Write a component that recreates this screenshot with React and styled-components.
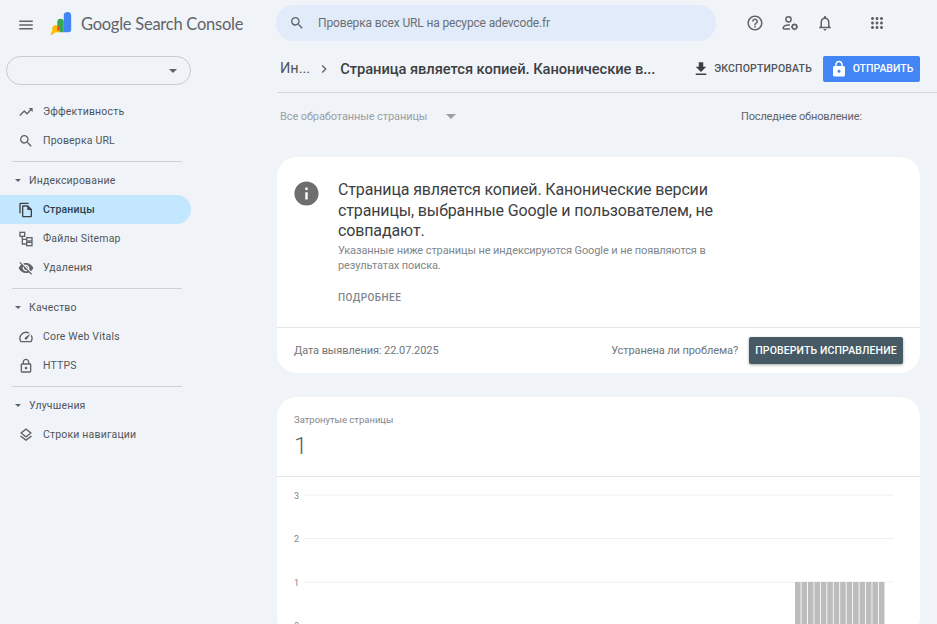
import React from 'react';
import styled, { createGlobalStyle } from 'styled-components';

const Global = createGlobalStyle`
  html, body { margin: 0; padding: 0; height: 624px; overflow: hidden; background: #f0f4f9; }
  body { font-family: Roboto, "Noto Sans", sans-serif; color: #444746; }
  * { box-sizing: border-box; }
`;

const Page = styled.div`
  display: grid;
  grid-template-columns: 277px 1fr;
  width: 937px;
  height: 624px;
  overflow: hidden;
`;
const Sidebar = styled.aside`
  display: flex;
  flex-direction: column;
`;
const Brand = styled.div`
  display: flex;
  align-items: center;
  height: 50px;
  padding-left: 17px;
`;
const BrandMark = styled.svg`
  width: 24px;
  height: 24px;
  margin-left: 14px;
  margin-right: 8px;
  margin-top: -4px;
  flex: none;
`;
const BrandName = styled.span`
  font-family: Lato, Roboto, sans-serif;
  font-size: 16.5px;
  letter-spacing: -0.25px;
  color: #5f6368;
  white-space: nowrap;
  margin-top: -2px;
`;
const PropertyPicker = styled.div`
  display: flex;
  align-items: center;
  justify-content: flex-end;
  width: 185px;
  height: 29px;
  margin: 6px 0 12px 6px;
  padding-right: 13px;
  border: 1px solid #c7c9cc;
  border-radius: 15px;
`;
const Caret = styled.span`
  width: 0;
  height: 0;
  border-left: ${p => p.$size || 4}px solid transparent;
  border-right: ${p => p.$size || 4}px solid transparent;
  border-top: ${p => p.$size || 4}px solid ${p => p.$color || '#5f6368'};
  flex: none;
`;
const NavRow = styled.div`
  display: flex;
  align-items: center;
  width: 191px;
  height: 29px;
  padding-left: 18px;
  gap: 9px;
  font-size: 10.5px;
  font-weight: ${p => (p.$active ? 500 : 400)};
  letter-spacing: 0.18px;
  color: ${p => (p.$active ? '#2a3f4f' : '#50545a')};
  background: ${p => (p.$active ? '#c2e7ff' : 'transparent')};
  border-radius: 0 15px 15px 0;
  white-space: nowrap;
  svg { width: 16px; height: 16px; flex: none; }
`;
const Divider = styled.div`
  width: 170px;
  height: 1px;
  margin: 6px 0 4px 12px;
  background: #cdd0d5;
`;
const SectionHead = styled.div`
  display: flex;
  align-items: center;
  height: 28px;
  padding-left: 15px;
  gap: 8px;
  font-size: 10.5px;
  letter-spacing: 0.18px;
  color: #50545a;
  margin-bottom: 1px;
`;
const Main = styled.main`
  display: flex;
  flex-direction: column;
  min-width: 0;
`;
const TopBar = styled.div`
  display: flex;
  align-items: center;
  height: 46px;
`;
const SearchBox = styled.div`
  display: flex;
  align-items: center;
  width: 440px;
  height: 36px;
  margin-left: -1px;
  padding-left: 13px;
  gap: 13px;
  background: #e1ebf9;
  border-radius: 18px;
  font-size: 12px;
  color: #6b7074;
  letter-spacing: -0.15px;
  svg { width: 16px; height: 16px; flex: none; }
`;
const TopIcons = styled.div`
  display: flex;
  align-items: center;
  margin-left: 30px;
  gap: 17px;
  svg { width: 18px; height: 18px; flex: none; display: block; }
  svg:last-child { margin-left: 17px; }
`;
const TitleBar = styled.div`
  display: flex;
  align-items: center;
  height: 47px;
  border-bottom: 1px solid #d5d8db;
  padding-left: 3px;
  padding-bottom: 1px;
`;
const Crumb = styled.span`
  font-size: 14.5px;
  color: #50545a;
`;
const CrumbSep = styled.svg`
  width: 16px;
  height: 16px;
  margin: 0 8px 0 6px;
  flex: none;
`;
const Title = styled.h1`
  margin: 0;
  width: 315px;
  flex: none;
  font-size: 14.7px;
  font-weight: 500;
  color: #3c4043;
  white-space: nowrap;
  letter-spacing: -0.05px;
`;
const ExportBtn = styled.div`
  display: flex;
  align-items: center;
  margin-left: 37px;
  gap: 4px;
  font-size: 10.5px;
  font-weight: 500;
  letter-spacing: 0.16px;
  color: #50545a;
  white-space: nowrap;
  svg { width: 18px; height: 18px; flex: none; }
`;
const SubmitBtn = styled.div`
  display: flex;
  align-items: center;
  justify-content: center;
  width: 97px;
  height: 26px;
  margin-left: 11px;
  gap: 5px;
  flex: none;
  border-radius: 2px;
  background: #4285f4;
  color: #fff;
  font-size: 10.5px;
  font-weight: 500;
  letter-spacing: 0;
  svg { width: 18px; height: 18px; flex: none; }
`;
const FilterRow = styled.div`
  display: flex;
  align-items: center;
  justify-content: space-between;
  height: 47px;
  padding: 0 75px 0 3px;
  font-size: 11px;
  color: #5f6368;
  letter-spacing: -0.14px;
`;
const FilterPick = styled.span`
  display: flex;
  align-items: center;
  gap: 19px;
  color: #9aa0a6;
  letter-spacing: -0.1px;
`;
const Card = styled.section`
  width: 643px;
  background: #fff;
  border-radius: 20px;
  margin-top: ${p => p.$top || 0}px;
  margin-bottom: 24px;
  flex: none;
`;
const IssueBody = styled.div`
  display: grid;
  grid-template-columns: 44px 1fr;
  padding: 23px 17px 0;
  height: 171px;
  border-bottom: 1px solid #e3e5e7;
`;
const InfoIcon = styled.svg`
  width: 29px;
  height: 29px;
  margin: -1px 0 0 -2.500px;
  fill: #6e6e6e;
`;
const IssueTitle = styled.h2`
  margin: 0 0 1px;
  width: 392px;
  font-size: 16px;
  line-height: 20.5px;
  font-weight: 400;
  letter-spacing: -0.14px;
  color: #3c4043;
`;
const IssueText = styled.p`
  margin: 0 0 13px;
  width: 392px;
  font-size: 11px;
  line-height: 15px;
  letter-spacing: -0.1px;
  color: #80868b;
`;
const MoreLink = styled.span`
  font-size: 10px;
  font-weight: 500;
  letter-spacing: 0.45px;
  color: #80868b;
`;
const IssueFooter = styled.div`
  display: flex;
  align-items: center;
  height: 45px;
  padding: 0 17px;
  font-size: 11px;
  color: #70757a;
  letter-spacing: -0.09px;
`;
const Question = styled.span`
  margin-left: auto;
  margin-right: 11px;
`;
const VerifyBtn = styled.div`
  display: flex;
  align-items: center;
  justify-content: center;
  width: 154px;
  height: 27px;
  border-radius: 2px;
  background: #455a64;
  color: #fff;
  font-size: 10.5px;
  font-weight: 500;
  letter-spacing: 0.12px;
  box-shadow: 0 1px 3px rgba(0, 0, 0, 0.35);
`;
const StatHead = styled.div`
  height: 80px;
  padding: 17px 17px 0;
  border-bottom: 1px solid #e3e5e7;
`;
const StatLabel = styled.div`
  font-size: 9.5px;
  color: #80868b;
  line-height: 12px;
`;
const StatValue = styled.div`
  margin-top: 6px;
  font-size: 24px;
  line-height: 28px;
  font-weight: 300;
  color: #5f6368;
`;
const Chart = styled.svg`
  display: block;
  width: 643px;
  height: 160px;
`;

const bars = Array.from({ length: 14 }, (_, i) => 518 + i * 6.45);
const ticks = [['3', 18], ['2', 61.5], ['1', 105], ['0', 148.5]];

const I = ({ d, fill = '#5f6368' }) => (
  <svg viewBox="0 0 24 24" fill={fill}><path d={d} /></svg>
);

export default function App() {
  return (
    <Page>
      <Global />
      <Sidebar>
        <Brand>
          <svg viewBox="0 0 24 24" width="18" height="18" fill="#5f6368" style={{ flex: 'none' }}><path d="M3 18h18v-2H3v2zm0-5h18v-2H3v2zm0-7v2h18V6H3z" /></svg>
          <BrandMark viewBox="0 0 26 26">
            <path d="M16 5a4 4 0 0 1 8 0v15a3 3 0 0 1-3 3h-5z" fill="#4285f4" />
            <path d="M9 12a3.5 3.5 0 0 1 7 0v11h-4l-3-3z" fill="#34a853" />
            <path d="M4.5 16.5a4 4 0 0 1 4.6-.8c1.3.6 2.4 2 2.4 3.5v3.8H7L3 26H1.5l2.2-5.2a4 4 0 0 1 .8-4.3z" fill="#fbbc04" />
            <path d="M9 15.7c1.4.7 2.5 2 2.5 3.5 0 .7-.2 1.300-.5 1.800H9z" fill="#ea4335" />
          </BrandMark>
          <BrandName>Google Search Console</BrandName>
        </Brand>
        <PropertyPicker><Caret /></PropertyPicker>
        <NavRow>
          <I d="M16 6l2.290 2.290-4.880 4.880-4-4L2 16.590 3.410 18l6-6 4 4 6.300-6.290L22 12V6z" />
          Эффективность
        </NavRow>
        <NavRow>
          <I d="M15.500 14h-.79l-.28-.27A6.470 6.470 0 0 0 16 9.500 6.500 6.500 0 1 0 9.500 16c1.610 0 3.090-.59 4.230-1.570l.27.28v.79l5 4.990L20.490 19l-4.990-5zm-6 0C7.010 14 5 11.990 5 9.500S7.010 5 9.500 5 14 7.010 14 9.500 11.990 14 9.500 14z" />
          Проверка URL
        </NavRow>
        <Divider />
        <SectionHead><Caret $size={3.500} />Индексирование</SectionHead>
        <NavRow $active>
          <I fill="#3c4043" d="M16 1H4c-1.100 0-2 .9-2 2v14h2V3h12V1zm-1 4H8c-1.100 0-1.990.9-1.990 2L6 21c0 1.100.89 2 1.990 2H19c1.100 0 2-.9 2-2V11l-6-6zM8 21V7h6v5h5v9H8z" />
          Страницы
        </NavRow>
        <NavRow>
          <svg viewBox="0 0 24 24" fill="none" stroke="#5f6368" strokeWidth="2">
            <rect x="3" y="2" width="7" height="6" />
            <rect x="13" y="10" width="8" height="5" />
            <rect x="13" y="17" width="8" height="5" />
            <path d="M6.500 8v11.500H13M6.500 12.500H13" />
          </svg>
          Файлы Sitemap
        </NavRow>
        <NavRow>
          <I d="M12 7c2.760 0 5 2.240 5 5 0 .65-.13 1.260-.36 1.830l2.920 2.920c1.510-1.260 2.700-2.890 3.430-4.750-1.730-4.390-6-7.500-11-7.500-1.400 0-2.740.25-3.980.7l2.160 2.160C10.740 7.130 11.350 7 12 7zM2 4.270l2.280 2.280.46.46C3.080 8.300 1.780 10.020 1 12c1.730 4.390 6 7.500 11 7.500 1.550 0 3.030-.3 4.380-.84l.42.42L19.730 22 21 20.730 3.270 3 2 4.270zM7.530 9.800l1.550 1.550c-.05.21-.08.43-.08.65 0 1.660 1.340 3 3 3 .22 0 .44-.03.65-.08l1.550 1.550c-.67.33-1.410.53-2.200.53-2.760 0-5-2.240-5-5 0-.79.2-1.530.53-2.200zm4.310-.78l3.150 3.150.02-.16c0-1.660-1.340-3-3-3l-.17.01z" />
          Удаления
        </NavRow>
        <Divider />
        <SectionHead><Caret $size={3.500} />Качество</SectionHead>
        <NavRow>
          <I d="M20.380 8.570l-1.230 1.850a8 8 0 0 1-.22 7.580H5.070A8 8 0 0 1 15.580 6.850l1.850-1.230A10 10 0 0 0 3.350 19a2 2 0 0 0 1.720 1h13.850a2 2 0 0 0 1.740-1 10 10 0 0 0-.27-10.440zm-9.790 6.840a2 2 0 0 0 2.830 0l5.660-8.490-8.490 5.660a2 2 0 0 0 0 2.830z" />
          Core Web Vitals
        </NavRow>
        <NavRow>
          <I d="M18 8h-1V6c0-2.760-2.240-5-5-5S7 3.240 7 6v2H6c-1.100 0-2 .9-2 2v10c0 1.100.9 2 2 2h12c1.100 0 2-.9 2-2V10c0-1.100-.9-2-2-2zM9 6c0-1.660 1.340-3 3-3s3 1.340 3 3v2H9V6zm9 14H6V10h12v10zm-6-3c1.100 0 2-.9 2-2s-.9-2-2-2-2 .9-2 2 .9 2 2 2z" />
          HTTPS
        </NavRow>
        <Divider />
        <SectionHead><Caret $size={3.500} />Улучшения</SectionHead>
        <NavRow>
          <I d="M11.990 18.540l-7.370-5.730L3 14.070l9 7 9-7-1.630-1.270-7.380 5.740zM12 16l7.360-5.730L21 9l-9-7-9 7 1.630 1.270L12 16zm0-11.470L17.740 9 12 13.470 6.260 9 12 4.530z" />
          Строки навигации
        </NavRow>
      </Sidebar>
      <Main>
        <TopBar>
          <SearchBox>
            <I d="M15.500 14h-.79l-.28-.27A6.470 6.470 0 0 0 16 9.500 6.500 6.500 0 1 0 9.500 16c1.610 0 3.090-.59 4.230-1.570l.27.28v.79l5 4.990L20.490 19l-4.990-5zm-6 0C7.010 14 5 11.990 5 9.500S7.010 5 9.500 5 14 7.010 14 9.500 11.990 14 9.500 14z" />
            Проверка всех URL на ресурсе adevcode.fr
          </SearchBox>
          <TopIcons>
            <I d="M11 18h2v-2h-2v2zm1-16C6.480 2 2 6.480 2 12s4.480 10 10 10 10-4.480 10-10S17.520 2 12 2zm0 18c-4.410 0-8-3.590-8-8s3.590-8 8-8 8 3.590 8 8-3.590 8-8 8zm0-14c-2.210 0-4 1.790-4 4h2c0-1.100.9-2 2-2s2 .9 2 2c0 2-3 1.750-3 5h2c0-2.250 3-2.500 3-5 0-2.210-1.790-4-4-4z" />
            <svg viewBox="0 0 24 24" fill="none" stroke="#5f6368" strokeWidth="2">
              <circle cx="10" cy="7" r="3.500" />
              <path d="M3 20v-1.500c0-2.500 4-4 7-4 .6 0 1.200.05 1.800.15M3 20h9" />
              <circle cx="18" cy="17" r="3" />
              <path d="M18 12.500v1.500M18 20v1.500M13.500 17H15M21 17h1.500M14.900 13.900l1 1M20.100 19.100l1 1M14.900 20.100l1-1M20.100 14.900l1-1" strokeWidth="1.800" />
            </svg>
            <I d="M12 22c1.100 0 2-.9 2-2h-4c0 1.100.9 2 2 2zm6-6v-5c0-3.070-1.630-5.640-4.500-6.320V4c0-.83-.67-1.500-1.500-1.500s-1.500.67-1.500 1.500v.68C7.640 5.360 6 7.920 6 11v5l-2 2v1h16v-1l-2-2zm-2 1H8v-6c0-2.480 1.510-4.500 4-4.500s4 2.020 4 4.500v6z" />
            <I d="M6 8c1.100 0 2-.9 2-2s-.9-2-2-2-2 .9-2 2 .9 2 2 2zm6 12c1.100 0 2-.9 2-2s-.9-2-2-2-2 .9-2 2 .9 2 2 2zm-6 0c1.100 0 2-.9 2-2s-.9-2-2-2-2 .9-2 2 .9 2 2 2zm0-6c1.100 0 2-.9 2-2s-.9-2-2-2-2 .9-2 2 .9 2 2 2zm6 0c1.100 0 2-.9 2-2s-.9-2-2-2-2 .9-2 2 .9 2 2 2zm6-6c1.100 0 2-.9 2-2s-.9-2-2-2-2 .9-2 2 .9 2 2 2zm-6 0c1.100 0 2-.9 2-2s-.9-2-2-2-2 .9-2 2 .9 2 2 2zm6 6c1.100 0 2-.9 2-2s-.9-2-2-2-2 .9-2 2 .9 2 2 2zm0 6c1.100 0 2-.9 2-2s-.9-2-2-2-2 .9-2 2 .9 2 2 2zM12 8c1.100 0 2-.9 2-2s-.9-2-2-2-2 .9-2 2 .9 2 2 2z" />
          </TopIcons>
        </TopBar>
        <TitleBar>
          <Crumb>Ин...</Crumb>
          <CrumbSep viewBox="0 0 24 24" fill="#5f6368"><path d="M8.590 16.590 13.170 12 8.590 7.410 10 6l6 6-6 6z" /></CrumbSep>
          <Title>Страница является копией. Канонические в...</Title>
          <ExportBtn>
            <I fill="#3c4043" d="M19 9h-4V3H9v6H5l7 7 7-7zM5 18v2h14v-2H5z" />
            ЭКСПОРТИРОВАТЬ
          </ExportBtn>
          <SubmitBtn>
            <I fill="#fff" d="M18 8h-1V6c0-2.760-2.240-5-5-5S7 3.240 7 6v2H6c-1.100 0-2 .9-2 2v10c0 1.100.9 2 2 2h12c1.100 0 2-.9 2-2V10c0-1.100-.9-2-2-2zm-6 9c-1.100 0-2-.9-2-2s.9-2 2-2 2 .9 2 2-.9 2-2 2zm3.100-9H8.900V6c0-1.710 1.390-3.100 3.100-3.100s3.100 1.390 3.100 3.100v2z" />
            ОТПРАВИТЬ
          </SubmitBtn>
        </TitleBar>
        <FilterRow>
          <FilterPick>Все обработанные страницы <Caret $size={5} $color="#9aa0a6" /></FilterPick>
          <span>Последнее обновление:</span>
        </FilterRow>
        <Card $top={17}>
          <IssueBody>
            <InfoIcon viewBox="0 0 24 24"><path d="M12 2C6.480 2 2 6.480 2 12s4.480 10 10 10 10-4.480 10-10S17.520 2 12 2zm1 15h-2v-6h2v6zm0-8h-2V7h2v2z" /></InfoIcon>
            <div>
              <IssueTitle>Страница является копией. Канонические версии страницы, выбранные Google и пользователем, не совпадают.</IssueTitle>
              <IssueText>Указанные ниже страницы не индексируются Google и не появляются в результатах поиска.</IssueText>
              <MoreLink>ПОДРОБНЕЕ</MoreLink>
            </div>
          </IssueBody>
          <IssueFooter>
            <span>Дата выявления: 22.07.2025</span>
            <Question>Устранена ли проблема?</Question>
            <VerifyBtn>ПРОВЕРИТЬ ИСПРАВЛЕНИЕ</VerifyBtn>
          </IssueFooter>
        </Card>
        <Card>
          <StatHead>
            <StatLabel>Затронутые страницы</StatLabel>
            <StatValue>1</StatValue>
          </StatHead>
          <Chart viewBox="0 0 643 160">
            {ticks.map(([t, y]) => (
              <g key={t}>
                <line x1="27" x2="617" y1={y} y2={y} stroke="#eeeff0" />
                <text x="17" y={y + 3.500} fontSize="9" fontFamily="Roboto" fill="#80868b">{t}</text>
              </g>
            ))}
            {bars.map(x => <rect key={x} x={x} y="105" width="5.600" height="44" fill="#bdbdbd" />)}
          </Chart>
        </Card>
      </Main>
    </Page>
  );
}
